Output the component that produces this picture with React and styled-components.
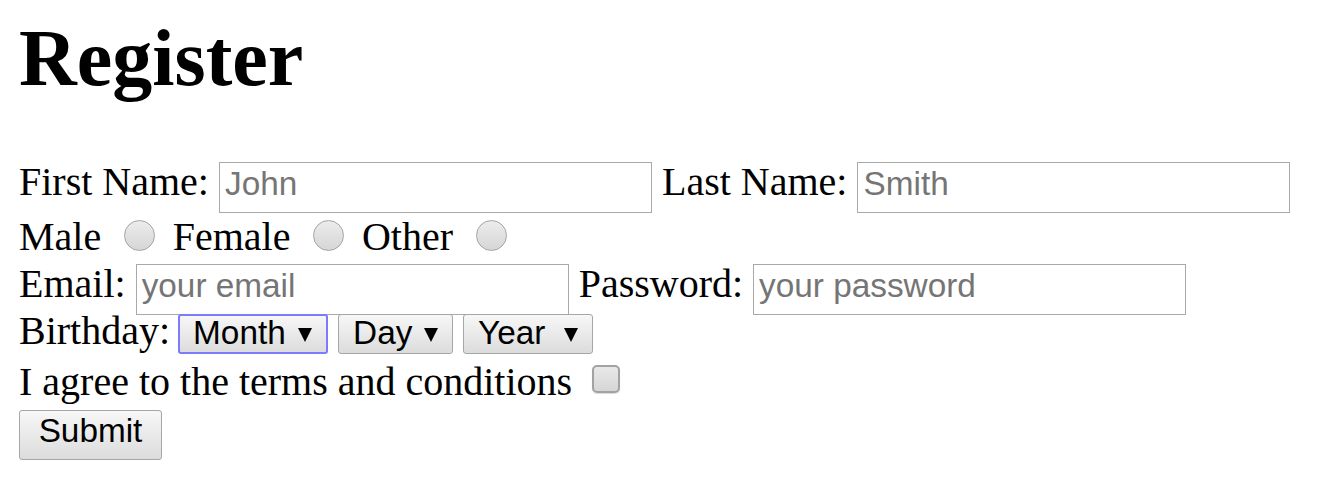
import React from 'react'
import styled, { createGlobalStyle } from 'styled-components'

const GlobalStyle = createGlobalStyle`
  html, body {
    margin: 0;
    padding: 0;
    background: #fff;
  }
  body {
    font-family: "Liberation Serif", "Times New Roman", serif;
    color: #000;
  }
`

const sans = `"Liberation Sans", Arial, sans-serif`

const Page = styled.div`
  padding: 0 19px;
`

const Title = styled.h1`
  margin: 12px 0 0;
  font-size: 80px;
  line-height: 92px;
  font-weight: 700;
`

const Form = styled.form`
  display: flex;
  flex-direction: column;
  margin-top: 55px;
`

const Row = styled.div`
  display: flex;
  align-items: baseline;
  gap: 10px;
  height: ${(p) => p.$height}px;
`

const Label = styled.label`
  font-size: 40px;
  line-height: 46px;
  white-space: nowrap;
`

const TextField = styled.input`
  box-sizing: border-box;
  width: 433px;
  height: 51px;
  margin: 0;
  padding: 0 5px 6px;
  border: 1px solid #a9a9a9;
  border-radius: 0;
  background: #fff;
  color: #000;
  font-family: ${sans};
  font-size: 33.33px;
  outline: none;
  &::placeholder {
    color: #757575;
    opacity: 1;
  }
`

const Radio = styled.input.attrs({ type: 'radio' })`
  appearance: none;
  box-sizing: border-box;
  align-self: flex-start;
  width: 31px;
  height: 31px;
  margin: 6px 8px 0 12.5px;
  border: 1px solid #a4a4a4;
  border-radius: 50%;
  background: linear-gradient(#ececec, #d6d6d6);
`

const Checkbox = styled.input.attrs({ type: 'checkbox' })`
  appearance: none;
  box-sizing: border-box;
  align-self: flex-start;
  width: 28px;
  height: 28px;
  margin: 6px 0 0 10px;
  border: 2px solid #a2a2a2;
  border-radius: 5px;
  background: linear-gradient(#e8e8e8, #d6d6d6);
  box-shadow: 0 1px 1px rgba(0, 0, 0, 0.15);
`

const Dropdown = styled.div`
  display: inline-flex;
  align-items: center;
  justify-content: space-between;
  box-sizing: border-box;
  width: ${(p) => p.$width}px;
  height: 40px;
  margin-left: ${(p) => (p.$focused ? -2 : 0)}px;
  padding: 0 14px 2px ${(p) => (p.$focused ? 13 : 14)}px;
  border: ${(p) => (p.$focused ? '2px solid #7b7bfb' : '1px solid #a6a6a6')};
  border-radius: 3px;
  background: linear-gradient(#f7f7f7, #dcdcdc);
  font-family: ${sans};
  font-size: 33.33px;
  line-height: 38px;
  cursor: default;
`

const Caret = styled.span`
  width: 0;
  height: 0;
  margin-top: 4px;
  border-left: 7.5px solid transparent;
  border-right: 7.5px solid transparent;
  border-top: 14px solid #000;
`

const SubmitButton = styled.button`
  box-sizing: border-box;
  width: 143px;
  height: 50px;
  margin: 0;
  padding: 0 0 8px;
  border: 1px solid #a6a6a6;
  border-radius: 3px;
  background: linear-gradient(#f7f7f7, #dcdcdc);
  color: #000;
  font-family: ${sans};
  font-size: 33.33px;
  line-height: 38px;
`

const Select = ({ label, width, focused }) => (
  <Dropdown role="listbox" $width={width} $focused={focused}>
    <span>{label}</span>
    <Caret />
  </Dropdown>
)

export default function App() {
  return (
    <Page>
      <GlobalStyle />
      <Title>Register</Title>
      <Form onSubmit={(e) => e.preventDefault()}>
        <Row $height={55}>
          <Label>First Name:</Label>
          <TextField type="text" placeholder="John" />
          <Label>Last Name:</Label>
          <TextField type="text" placeholder="Smith" />
        </Row>
        <Row $height={47}>
          <Label>Male</Label>
          <Radio name="gender" />
          <Label>Female</Label>
          <Radio name="gender" />
          <Label>Other</Label>
          <Radio name="gender" />
        </Row>
        <Row $height={47}>
          <Label>Email:</Label>
          <TextField type="email" placeholder="your email" />
          <Label>Password:</Label>
          <TextField type="password" placeholder="your password" />
        </Row>
        <Row $height={51}>
          <Label>Birthday:</Label>
          <Select label="Month" width={150} focused />
          <Select label="Day" width={115} />
          <Select label="Year" width={130} />
        </Row>
        <Row $height={51}>
          <Label>I agree to the terms and conditions</Label>
          <Checkbox />
        </Row>
        <div>
          <SubmitButton type="submit">Submit</SubmitButton>
        </div>
      </Form>
    </Page>
  )
}
